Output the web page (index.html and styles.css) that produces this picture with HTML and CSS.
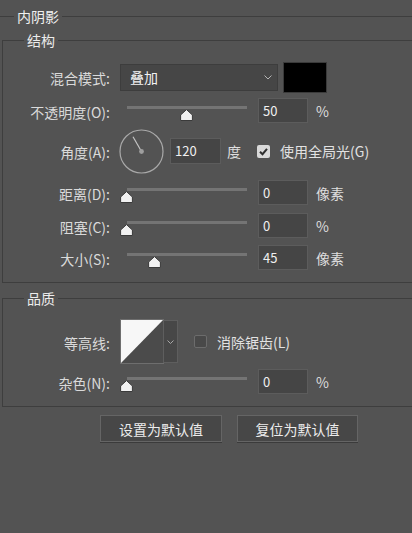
FILE: index.html
```html
<!DOCTYPE html>
<html lang="zh-CN">
<head>
<meta charset="utf-8">
<title>内阴影</title>
<link rel="stylesheet" href="styles.css">
</head>
<body>
<div class="panel">
  <fieldset class="group outer">
    <legend class="title">内阴影</legend>

    <fieldset class="group sub struct">
      <legend class="subtitle">结构</legend>

      <div class="row r1">
        <label class="lbl">混合模式:</label>
        <div class="select">
          <span class="sel-text">叠加</span>
          <svg class="chev" width="8" height="5" viewBox="0 0 8 5"><path d="M0.5 0.5 L4 4 L7.5 0.5" fill="none" stroke="#b5b5b5" stroke-width="1"/></svg>
        </div>
        <div class="swatch"></div>
      </div>

      <div class="row r2">
        <label class="lbl">不透明度(O):</label>
        <div class="slider"><div class="track"></div>
          <svg class="thumb" style="left:60px" width="13" height="12" viewBox="0 0 13 12"><path d="M6.5 0.6 L12.4 6 V11.5 H0.6 V6 Z" fill="#f1f1f1" stroke="#3a3a3a" stroke-width="1" stroke-linejoin="round"/></svg>
        </div>
        <div class="field">50</div>
        <span class="unit">%</span>
      </div>

      <div class="row r3">
        <label class="lbl">角度(A):</label>
        <svg class="dial" width="45" height="45" viewBox="0 0 45 45">
          <circle cx="22.5" cy="22.5" r="21.5" fill="none" stroke="#a9a9a9" stroke-width="1.2"/>
          <line x1="22.5" y1="22.5" x2="14" y2="7.8" stroke="#c4c4c4" stroke-width="1.2"/>
          <circle cx="22.5" cy="22.5" r="2.4" fill="#9e9e9e"/>
        </svg>
        <div class="field f-angle">120</div>
        <span class="unit u-deg">度</span>
        <span class="check on"><svg width="13" height="13" viewBox="0 0 13 13"><path d="M3 6.8 L5.5 9.2 L10 3.8" fill="none" stroke="#2e2e2e" stroke-width="2"/></svg></span>
        <span class="check-lbl">使用全局光(G)</span>
      </div>

      <div class="row r4">
        <label class="lbl">距离(D):</label>
        <div class="slider"><div class="track"></div>
          <svg class="thumb" style="left:0px" width="13" height="12" viewBox="0 0 13 12"><path d="M6.5 0.6 L12.4 6 V11.5 H0.6 V6 Z" fill="#f1f1f1" stroke="#3a3a3a" stroke-width="1" stroke-linejoin="round"/></svg>
        </div>
        <div class="field">0</div>
        <span class="unit">像素</span>
      </div>

      <div class="row r5">
        <label class="lbl">阻塞(C):</label>
        <div class="slider"><div class="track"></div>
          <svg class="thumb" style="left:0px" width="13" height="12" viewBox="0 0 13 12"><path d="M6.5 0.6 L12.4 6 V11.5 H0.6 V6 Z" fill="#f1f1f1" stroke="#3a3a3a" stroke-width="1" stroke-linejoin="round"/></svg>
        </div>
        <div class="field">0</div>
        <span class="unit">%</span>
      </div>

      <div class="row r6">
        <label class="lbl">大小(S):</label>
        <div class="slider"><div class="track"></div>
          <svg class="thumb" style="left:28px" width="13" height="12" viewBox="0 0 13 12"><path d="M6.5 0.6 L12.4 6 V11.5 H0.6 V6 Z" fill="#f1f1f1" stroke="#3a3a3a" stroke-width="1" stroke-linejoin="round"/></svg>
        </div>
        <div class="field">45</div>
        <span class="unit">像素</span>
      </div>
    </fieldset>

    <fieldset class="group sub quality">
      <legend class="subtitle">品质</legend>

      <div class="row q1">
        <label class="lbl">等高线:</label>
        <div class="contour">
          <svg class="curve" width="42" height="43" viewBox="0 0 42 43">
            <rect width="42" height="43" fill="#4b4b4b"/>
            <polygon points="0,0 42,0 0,43" fill="#f7f7f7"/>
          </svg>
          <div class="contour-drop">
            <svg width="7" height="4" viewBox="0 0 7 4"><path d="M0.5 0.5 L3.5 3.5 L6.5 0.5" fill="none" stroke="#a8a8a8" stroke-width="1"/></svg>
          </div>
        </div>
        <span class="check off"></span>
        <span class="check-lbl">消除锯齿(L)</span>
      </div>

      <div class="row q2">
        <label class="lbl">杂色(N):</label>
        <div class="slider"><div class="track"></div>
          <svg class="thumb" style="left:0px" width="13" height="12" viewBox="0 0 13 12"><path d="M6.5 0.6 L12.4 6 V11.5 H0.6 V6 Z" fill="#f1f1f1" stroke="#3a3a3a" stroke-width="1" stroke-linejoin="round"/></svg>
        </div>
        <div class="field">0</div>
        <span class="unit">%</span>
      </div>
    </fieldset>
  </fieldset>

  <div class="actions">
    <button class="btn b1">设置为默认值</button>
    <button class="btn b2">复位为默认值</button>
  </div>
</div>
</body>
</html>
```

FILE: styles.css
```css
html, body {
  margin: 0;
  padding: 0;
  background: #535353;
  overflow: hidden;
}
body {
  font-family: "Noto Sans CJK SC", "Noto Sans", sans-serif;
  font-size: 14px;
  color: #d8d8d8;
  width: 412px;
  height: 533px;
}

.group {
  margin: 0;
  padding: 0;
  min-width: 0;
  border: 1px solid #3e3e3e;
}
.outer {
  margin-top: 7px;
  padding-left: 2px;
  border-left: none;
  border-right: none;
  border-bottom: none;
}
.title {
  margin-left: 12px;
  padding: 0 3px;
  line-height: 19px;
  color: #f0f0f0;
}
.sub {
  border-right: none;
}
.subtitle {
  margin-left: 21px;
  padding: 0 3px;
  line-height: 19px;
  color: #ececec;
}
.struct {
  margin-top: 5px;
  padding-top: 11px;
  padding-bottom: 7px;
}
.quality {
  margin-top: 6px;
  padding-top: 12px;
  padding-bottom: 6px;
}

.row {
  display: flex;
  align-items: center;
}
.r1 { height: 32px; }
.r2 { height: 35px; }
.r3 { height: 46px; }
.r4 { height: 37px; }
.r5 { height: 29px; }
.r6 { height: 35px; }
.q1 { height: 43px; }
.q2 { height: 37px; }

.lbl {
  flex: none;
  width: 107px;
  margin-right: 10px;
  text-align: right;
  line-height: 18px;
  color: #dadada;
  padding-top: 2px;
}

.select {
  flex: none;
  width: 158px;
  height: 27px;
  box-sizing: border-box;
  background: #464646;
  border: 1px solid #3d3d3d;
  display: flex;
  align-items: center;
  justify-content: space-between;
  padding: 0 5px 0 9px;
}
.sel-text {
  color: #f2f2f2;
  line-height: 18px;
}
.chev { margin-top: 1px; }
.swatch {
  flex: none;
  width: 44px;
  height: 31px;
  box-sizing: border-box;
  margin-left: 5px;
  background: #000;
  border: 1px solid #3a3a3a;
}

.slider {
  flex: none;
  position: relative;
  width: 127px;
  height: 16px;
  margin-top: 7px;
}
.track {
  margin-left: 7px;
  width: 120px;
  height: 3px;
  background: #747474;
}
.thumb {
  position: absolute;
  top: 3px;
}

.field {
  flex: none;
  width: 50px;
  height: 25px;
  box-sizing: border-box;
  margin-left: 11px;
  background: #454545;
  border: 1px solid #5c5c5c;
  color: #f0f0f0;
  font-size: 13px;
  line-height: 23px;
  padding-left: 4px;
}
.unit {
  margin-left: 8px;
  line-height: 18px;
  color: #dedede;
}

.dial {
  flex: none;
  margin-left: -1px;
}
.f-angle {
  width: 51px;
  height: 26px;
  margin-left: 6px;
  line-height: 24px;
}
.u-deg {
  margin-left: 6px;
}
.check {
  flex: none;
  width: 13px;
  height: 13px;
  box-sizing: border-box;
  border-radius: 2px;
  display: flex;
}
.check.on {
  margin-left: 16px;
  background: #d9d9d9;
}
.check.off {
  margin-left: 16px;
  background: #494949;
  border: 1px solid #6c6c6c;
}
.check-lbl {
  margin-left: 10px;
  line-height: 18px;
  color: #e2e2e2;
}

.contour {
  flex: none;
  display: flex;
  height: 43px;
  margin-left: 1px;
}
.curve {
  display: block;
  outline: 1px solid #6e6e6e;
}
.contour-drop {
  width: 15px;
  height: 43px;
  box-sizing: border-box;
  background: #474747;
  border: 1px solid #5e5e5e;
  display: flex;
  align-items: center;
  justify-content: center;
}

.actions {
  display: flex;
  gap: 15px;
  padding-left: 100px;
  margin-top: 8px;
}
.btn {
  height: 27px;
  box-sizing: border-box;
  background: #474747;
  border: 1px solid #656565;
  box-shadow: 0 1px 0 #3b3b3b;
  color: #ececec;
  font-family: "Noto Sans CJK SC", "Noto Sans", sans-serif;
  font-size: 14px;
  line-height: 18px;
  padding: 0;
}
.b1 { width: 122px; }
.b2 { width: 121px; }
```
